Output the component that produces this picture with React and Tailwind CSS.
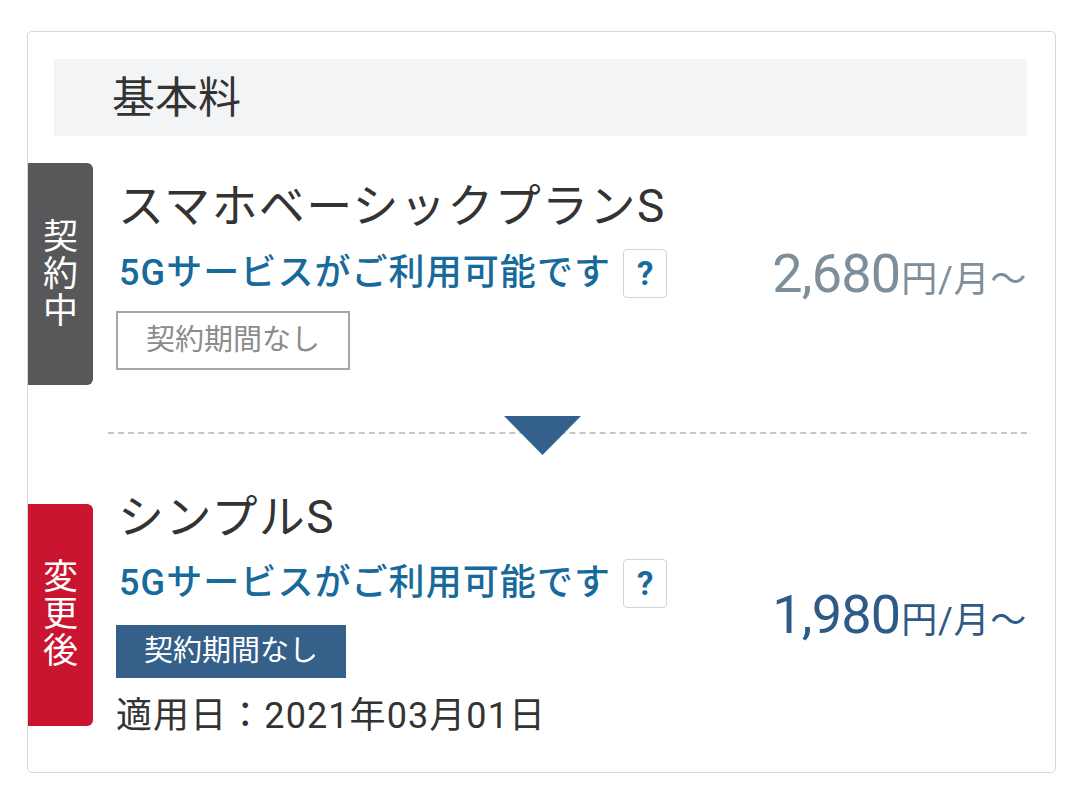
import React from "react";

const FONT = { fontFamily: "Roboto, 'Noto Sans CJK JP', sans-serif" };

function SideLabel({ chars, className }) {
  return (
    <div
      className={`w-[65px] h-[222px] shrink-0 rounded-r-[6px] flex flex-col items-center justify-center text-white text-[35px] leading-[37px] ${className}`}
    >
      {chars.map((c) => (
        <span key={c}>{c}</span>
      ))}
    </div>
  );
}

function FiveG() {
  return (
    <div className="flex items-center h-[49px]">
      <span className="pl-[3px] text-[36px] leading-[49px] font-medium text-[#176a9c] tracking-[0.03em]">
        5Gサービスがご利用可能です
      </span>
      <span className="ml-[12px] w-[44px] h-[49px] border border-[#d4d4d4] rounded-[4px] flex items-center justify-center text-[33px] leading-none font-bold text-[#176a9c]">
        ?
      </span>
    </div>
  );
}

function Price({ amount, color }) {
  return (
    <div className={`shrink-0 flex items-baseline ${color}`}>
      <span className="text-[54px] leading-none tracking-[-0.015em]">{amount}</span>
      <span className="text-[36px] leading-none ml-[1px] tracking-[0.02em]">円/月〜</span>
    </div>
  );
}

export default function App() {
  return (
    <div className="min-h-screen bg-white pt-[31px] pl-[27px]" style={FONT}>
      <div className="w-[1029px] border border-[#d8d8d8] rounded-[5px] pt-[27px] pb-[32px]">
        <div className="ml-[26px] mr-[28px] h-[77px] bg-[#f3f4f6] flex items-center pl-[58px]">
          <span className="text-[43px] text-[#333] leading-none mt-[2px]">基本料</span>
        </div>

        <div className="mt-[27px] flex items-center pr-[28px]">
          <SideLabel chars={["契", "約", "中"]} className="bg-[#58585a]" />
          <div className="ml-[23px] flex-1 flex flex-col items-start">
            <div className="pl-[2px] text-[46px] leading-[56px] text-[#333] tracking-[0.03em]">
              スマホベーシックプランS
            </div>
            <div className="mt-[15px]">
              <FiveG />
            </div>
            <div className="mt-[13px] w-[234px] h-[59px] border-2 border-[#a6a6a6] flex items-center justify-center text-[29px] text-[#8c8c8c]">
              契約期間なし
            </div>
          </div>
          <Price amount="2,680" color="text-[#7e8e9a]" />
        </div>

        <div className="relative mt-[47px] h-[2px]">
          <div className="ml-[80px] mr-[28px] border-t-2 border-dashed border-[#c6c6c6]" />
          <svg
            className="absolute left-[476px] top-[-16px]"
            width="77"
            height="39"
            viewBox="0 0 77 39"
          >
            <polygon points="0,0 77,0 38.5,39" fill="#33618c" />
          </svg>
        </div>

        <div className="mt-[55px] flex items-center pr-[28px]">
          <SideLabel chars={["変", "更", "後"]} className="bg-[#c9152f]" />
          <div className="ml-[23px] flex-1 flex flex-col items-start">
            <div className="pl-[2px] text-[46px] leading-[56px] text-[#333] tracking-[0.03em]">
              シンプルS
            </div>
            <div className="mt-[14px]">
              <FiveG />
            </div>
            <div className="mt-[17px] w-[230px] h-[53px] bg-[#356089] flex items-center justify-center text-[29px] text-white">
              契約期間なし
            </div>
            <div className="mt-[14px] text-[36px] leading-[48px] text-[#333] tracking-[0.03em]">
              適用日：2021年03月01日
            </div>
          </div>
          <Price amount="1,980" color="text-[#2d5b85]" />
        </div>
      </div>
    </div>
  );
}
